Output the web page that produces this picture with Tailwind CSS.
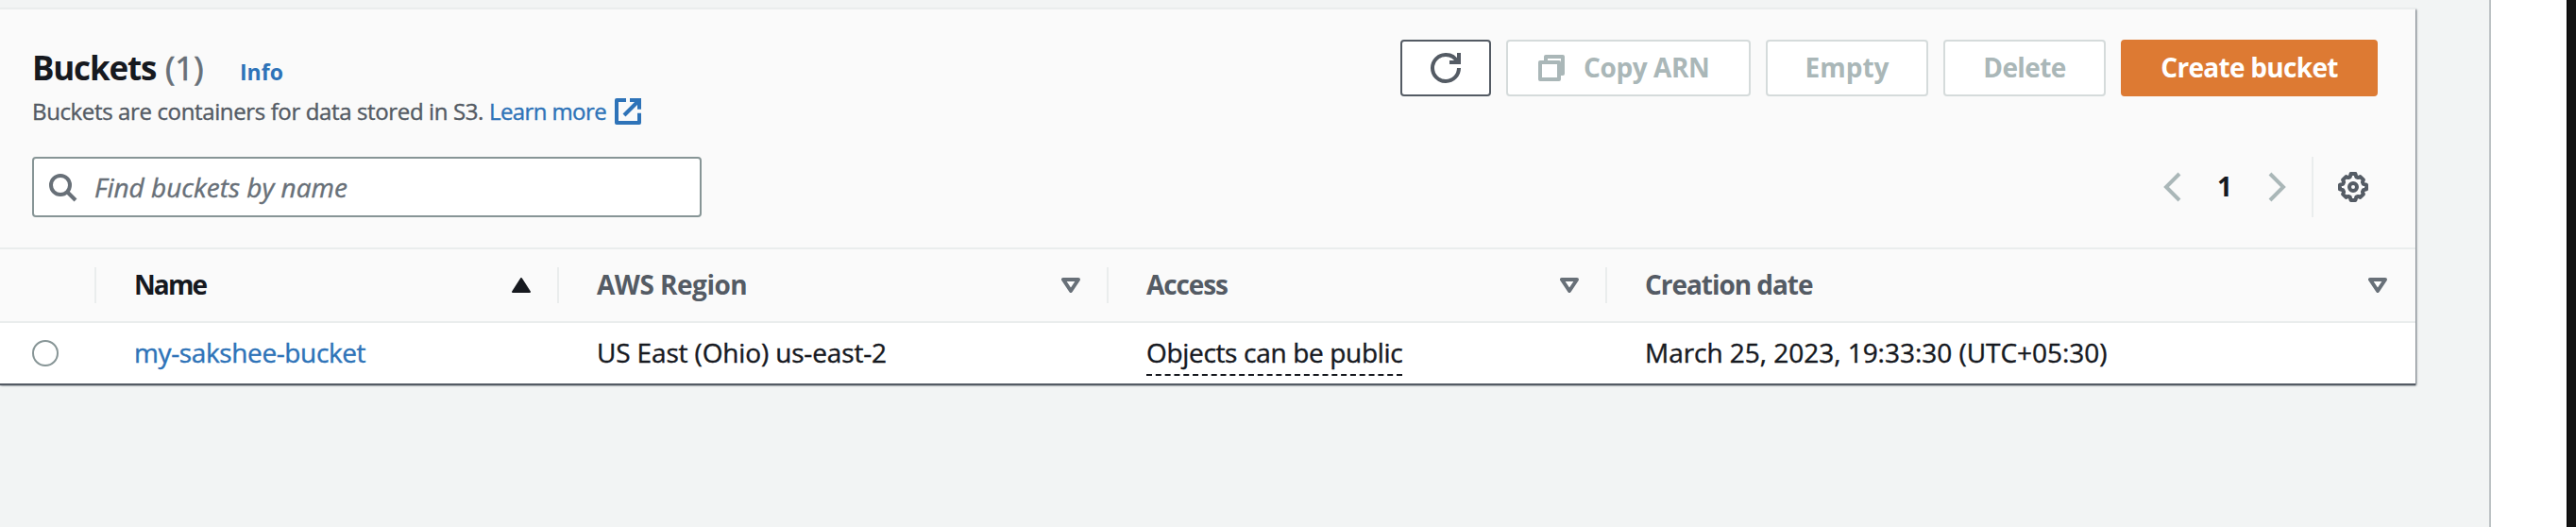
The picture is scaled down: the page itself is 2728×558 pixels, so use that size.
<!DOCTYPE html>
<html lang="en">
<head>
<meta charset="utf-8">
<title>Buckets</title>
<script src="https://cdn.jsdelivr.net/npm/@tailwindcss/browser@4"></script>
</head>
<body class="flex h-[558px] w-[2728px] overflow-hidden bg-white font-['Open_Sans','Noto_Sans',sans-serif] text-[28px] text-[#16191f]">

<main class="h-full w-[2638px] shrink-0 border-r-2 border-[#bcc2c4] bg-[#f2f4f4] pt-2">
  <section class="w-[2558px] border-t-2 border-[#eaeded] bg-white shadow-[0_2px_1px_#545b64,1px_2px_2px_#687078]">

    <header class="h-[254px] border-b-2 border-[#eaeded] bg-[#fafafa] pt-8 pr-10 pl-[34px]">
      <div class="flex h-[94px] items-start justify-between">
        <div>
          <div class="flex h-[58px] items-baseline leading-[60px]">
            <h2 class="w-[141px] text-[35px] font-bold tracking-[-1.2px] whitespace-nowrap">Buckets</h2>
            <span class="w-[78px] text-[35px] text-[#687078] [-webkit-text-stroke:0.7px]">(1)</span>
            <a class="pl-px text-[23px] font-bold text-[#2e73b8]">Info</a>
          </div>
          <p class="flex items-center text-[24px] leading-9 whitespace-nowrap text-[#545b64] [-webkit-text-stroke:0.4px]">
            <span class="w-[484px] tracking-[-0.37px]">Buckets are containers for data stored in S3.</span>
            <a class="flex items-center text-[#2e73b8]">
              <span class="w-[131px] tracking-[-0.6px]">Learn more</span>
              <svg class="size-8" viewBox="0 0 16 16" fill="none" stroke="currentColor" stroke-width="2" stroke-linejoin="round"><path d="M9 2h5v4.9" stroke-linejoin="miter"/><path d="M6 10l8-8"/><path d="M14 8.9V14H2V2h5"/></svg>
            </a>
          </p>
        </div>

        <div class="flex gap-4 font-bold leading-[54px] whitespace-nowrap text-[#aab7b8]">
          <button class="flex h-[60px] w-24 items-center justify-center rounded-[4px] border-2 border-[#545b64] bg-white text-[#545b64]">
            <svg class="size-8" viewBox="0 0 16 16" fill="none" stroke="currentColor" stroke-width="2"><path d="M10 5h5V0"/><path d="M15 8a6.957 6.957 0 0 1-7 7 6.957 6.957 0 0 1-7-7 6.957 6.957 0 0 1 7-7 6.87 6.87 0 0 1 6.3 4"/></svg>
          </button>
          <button class="flex h-[60px] w-[259px] items-center gap-[18px] rounded-[4px] border-2 border-[#d5dbdb] bg-white pl-[30px]">
            <svg class="size-8" viewBox="0 0 16 16" fill="none" stroke="currentColor" stroke-width="2" stroke-linejoin="round"><path d="M2 5h10v9H2z"/><path d="M5 5V2h9v9h-2"/></svg>
            <span class="pb-0.5 tracking-[-0.4px]">Copy ARN</span>
          </button>
          <button class="h-[60px] w-[172px] rounded-[4px] border-2 border-[#d5dbdb] bg-white pb-0.5">Empty</button>
          <button class="h-[60px] w-[172px] rounded-[4px] border-2 border-[#d5dbdb] bg-white pb-0.5 tracking-[-0.6px]">Delete</button>
          <button class="h-[60px] w-[272px] rounded-[4px] border-2 border-[#dd7a33] bg-[#dd7a33] pb-0.5 tracking-[-0.7px] text-white">Create bucket</button>
        </div>
      </div>

      <div class="mt-[30px] flex h-16 items-center justify-between">
        <label class="flex h-16 w-[709px] items-center rounded-[4px] border-2 border-[#879596] bg-white pl-[14px] text-[#687078]">
          <svg class="size-8" viewBox="0 0 16 16" fill="none" stroke="currentColor" stroke-width="2"><circle cx="7" cy="7" r="5"/><path d="M15 15l-4-4"/></svg>
          <span class="pl-[18px] italic [-webkit-text-stroke:0.4px]">Find buckets by name</span>
        </label>
        <div class="flex h-16 items-center pr-[10px]">
          <svg class="size-8 text-[#aab7b8]" viewBox="0 0 16 16" fill="none" stroke="currentColor" stroke-width="2"><path d="M11 1L4 8l7 7"/></svg>
          <span class="w-[76px] pb-0.5 text-center font-bold">1</span>
          <svg class="size-8 text-[#aab7b8]" viewBox="0 0 16 16" fill="none" stroke="currentColor" stroke-width="2"><path d="M5 1l7 7-7 7"/></svg>
          <span class="mr-[26px] ml-[22px] h-16 w-0.5 bg-[#eaeded]"></span>
          <svg class="size-8 text-[#545b64]" viewBox="-8 -8 16 16" fill="none" stroke="currentColor" stroke-width="2" stroke-linejoin="round"><circle r="2"/><path d="M7-1.2V1.2L5.36 1.64 4.95 2.63 5.45 3.75 3.75 5.45 2.63 4.95 1.64 5.36 1.2 7H-1.2L-1.64 5.36-2.63 4.95-3.75 5.45-5.45 3.75-4.95 2.63-5.36 1.64-7 1.2V-1.2L-5.36-1.64-4.95-2.63-5.45-3.75-3.75-5.45-2.63-4.95-1.64-5.36-1.2-7H1.2L1.64-5.36 2.63-4.95 3.75-5.45 5.45-3.75 4.95-2.63 5.36-1.64z"/></svg>
        </div>
      </div>
    </header>

    <div class="grid h-[78px] grid-cols-[102px_490px_582px_528px_856px] items-center border-b-2 border-[#eaeded] bg-[#fafafa] font-bold leading-[38px] text-[#545b64]">
      <div class="h-[38px] border-r-2 border-[#eaeded]"></div>
      <div class="flex h-[38px] items-center justify-between border-r-2 border-[#eaeded] pr-7 pl-10 text-[#16191f]">
        <span class="pb-0.5 tracking-[-1.9px]">Name</span>
        <svg class="h-4 w-5" viewBox="0 0 20 16" fill="currentColor" stroke="currentColor" stroke-width="2" stroke-linejoin="round"><path d="M10 1L19 15H1z"/></svg>
      </div>
      <div class="flex h-[38px] items-center justify-between border-r-2 border-[#eaeded] pr-7 pl-10">
        <span class="pb-0.5 tracking-[-0.5px]">AWS Region</span>
        <svg class="h-4 w-5 text-[#687078]" viewBox="0 0 20 16" fill="#fff" stroke="currentColor" stroke-width="4" stroke-linejoin="round"><path d="M2 2H18L10 14z"/></svg>
      </div>
      <div class="flex h-[38px] items-center justify-between border-r-2 border-[#eaeded] pr-7 pl-10">
        <span class="pb-0.5 tracking-[-1.1px]">Access</span>
        <svg class="h-4 w-5 text-[#687078]" viewBox="0 0 20 16" fill="#fff" stroke="currentColor" stroke-width="4" stroke-linejoin="round"><path d="M2 2H18L10 14z"/></svg>
      </div>
      <div class="flex h-[38px] items-center justify-between pr-[30px] pl-10">
        <span class="pb-0.5 tracking-[-1.05px]">Creation date</span>
        <svg class="h-4 w-5 text-[#687078]" viewBox="0 0 20 16" fill="#fff" stroke="currentColor" stroke-width="4" stroke-linejoin="round"><path d="M2 2H18L10 14z"/></svg>
      </div>
    </div>

    <div class="grid h-16 grid-cols-[102px_490px_582px_528px_856px] items-center leading-[38px] whitespace-nowrap [-webkit-text-stroke:0.4px]">
      <div class="pl-[34px]"><span class="block size-7 rounded-full border-2 border-[#879596] bg-white"></span></div>
      <a class="pb-0.5 pl-10 tracking-[-0.38px] text-[#2e73b8]">my-sakshee-bucket</a>
      <span class="pb-0.5 pl-10 tracking-[-0.15px]">US East (Ohio) us-east-2</span>
      <div class="pt-1 pl-10"><span class="block h-11 w-[271px] border-b-2 border-dashed border-[#16191f] tracking-[-0.33px]">Objects can be public</span></div>
      <span class="pb-0.5 pl-10 tracking-[-0.03px]">March 25, 2023, 19:33:30 (UTC+05:30)</span>
    </div>
  </section>
</main>

<div class="w-20 shrink-0 bg-white"></div>
<div class="w-[10px] shrink-0 border-l border-black bg-[#141414]"></div>

</body>
</html>
